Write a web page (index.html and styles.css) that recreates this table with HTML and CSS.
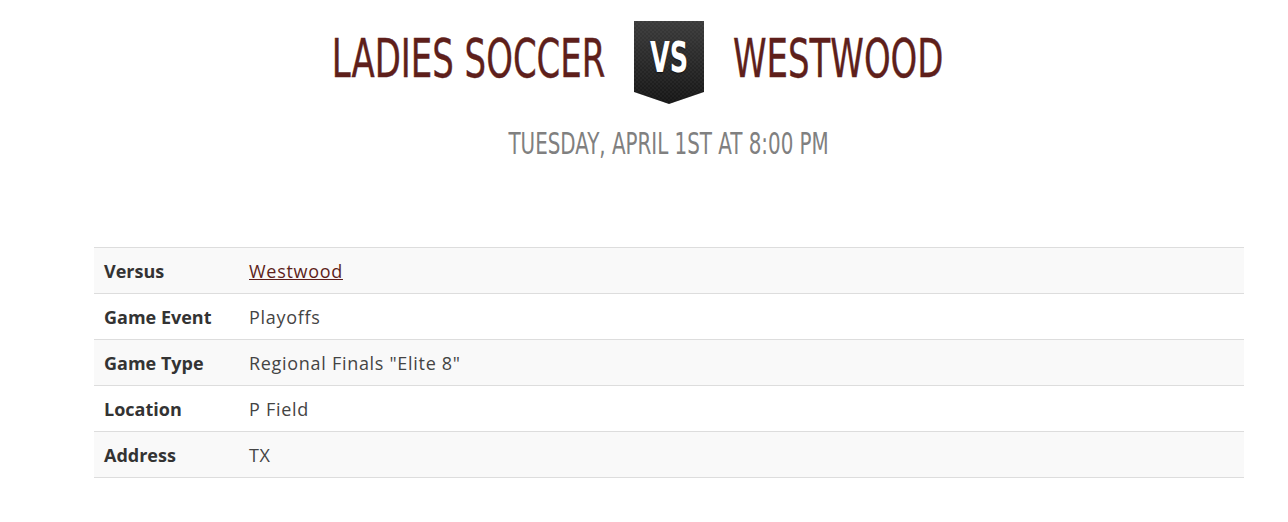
FILE: index.html
```html
<!DOCTYPE html>
<html>
<head>
<meta charset="utf-8">
<link rel="stylesheet" href="styles.css">
</head>
<body>
<div class="page">
  <header class="matchup">
    <div class="team team-home"><span class="team-name">LADIES SOCCER</span></div>
    <div class="vs-badge">
      <svg class="vs-shape" width="70" height="84" viewBox="0 0 70 84">
        <defs>
          <linearGradient id="bg" x1="0" y1="0" x2="0" y2="1">
            <stop offset="0" stop-color="#3b3b3b"/>
            <stop offset="1" stop-color="#161616"/>
          </linearGradient>
          <pattern id="chk" width="4" height="4" patternUnits="userSpaceOnUse">
            <rect width="2" height="2" fill="#ffffff" fill-opacity="0.035"/>
            <rect x="2" y="2" width="2" height="2" fill="#ffffff" fill-opacity="0.035"/>
          </pattern>
        </defs>
        <path d="M0 0 H70 V71 L35 83 L0 71 Z" fill="url(#bg)"/>
        <path d="M0 0 H70 V71 L35 83 L0 71 Z" fill="url(#chk)"/>
      </svg>
      <span class="vs-text">VS</span>
    </div>
    <div class="team team-away"><span class="team-name">WESTWOOD</span></div>
  </header>
  <div class="game-date"><span class="date-text">TUESDAY, APRIL 1ST AT 8:00 PM</span></div>

  <table class="details">
    <tbody>
      <tr><th>Versus</th><td><a href="#">Westwood</a></td></tr>
      <tr><th>Game Event</th><td>Playoffs</td></tr>
      <tr><th>Game Type</th><td>Regional Finals "Elite 8"</td></tr>
      <tr><th>Location</th><td>P Field</td></tr>
      <tr><th>Address</th><td>TX</td></tr>
    </tbody>
  </table>
</div>
</body>
</html>
```
FILE: styles.css
```css
html, body {
  margin: 0;
  padding: 0;
  background: #ffffff;
}
body {
  font-family: "Open Sans", "Noto Sans", sans-serif;
}
.page {
  width: 1150px;
  margin-left: 94px;
}
.matchup {
  display: grid;
  grid-template-columns: 1fr 70px 1fr;
  column-gap: 29px;
  padding-top: 21px;
  height: 84px;
}
.team {
  font-family: "Liberation Sans Narrow", "DejaVu Sans Condensed", sans-serif;
  font-size: 53px;
  line-height: 76px;
  color: #5e1f1b;
  white-space: nowrap;
}
.team-home {
  text-align: right;
}
.team-name {
  display: inline-block;
  transform: scaleX(0.712);
  -webkit-text-stroke: 0.4px #5e1f1b;
}
.team-home .team-name {
  transform-origin: right center;
}
.team-away .team-name {
  transform-origin: left center;
}
.vs-badge {
  position: relative;
  width: 70px;
  height: 84px;
}
.vs-shape {
  display: block;
}
.vs-text {
  position: absolute;
  left: 0;
  right: 0;
  top: 11px;
  text-align: center;
  font-family: "Liberation Sans Narrow", "DejaVu Sans Condensed", sans-serif;
  font-size: 43px;
  font-weight: 700;
  line-height: 50px;
  color: #ffffff;
  text-shadow: 0 1px 2px rgba(0,0,0,0.6);
  transform: scaleX(0.66);
}
.game-date {
  text-align: center;
  margin-top: 18px;
  font-family: "Liberation Sans Narrow", "DejaVu Sans Condensed", sans-serif;
  font-size: 31px;
  line-height: 40px;
  color: #808080;
}
.date-text {
  display: inline-block;
  transform: scaleX(0.713);
}
.details {
  margin-top: 84px;
  width: 100%;
  border-collapse: collapse;
  font-size: 18px;
  border-bottom: 1px solid #dddddd;
}
.details tr {
  border-top: 1px solid #dddddd;
}
.details tr:nth-child(odd) {
  background: #f9f9f9;
}
.details th,
.details td {
  height: 45px;
  padding: 0 10px;
  text-align: left;
  vertical-align: middle;
}
.details th {
  width: 125px;
  font-weight: 700;
  color: #333333;
}
.details td {
  color: #444444;
  letter-spacing: 0.7px;
}
.details a {
  color: #5e1f1b;
  text-decoration: underline;
}
```
